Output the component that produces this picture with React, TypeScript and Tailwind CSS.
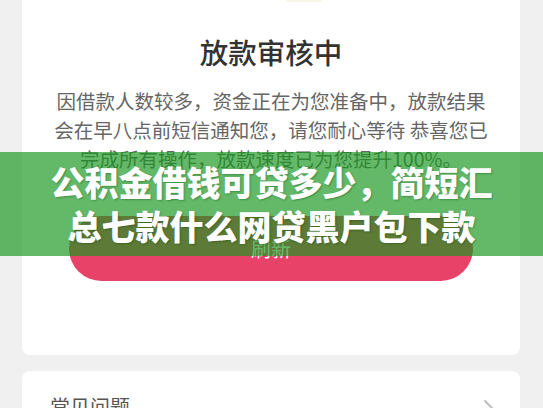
const cjk = "font-['Noto_Sans_CJK_SC','Noto_Sans',sans-serif]";

function Chevron() {
  return (
    <svg width="12" height="20" viewBox="0 0 12 20" fill="none" className="shrink-0">
      <path d="M2 2l8 8-8 8" stroke="#bdbdbd" strokeWidth="2" strokeLinecap="round" strokeLinejoin="round" />
    </svg>
  );
}

export default function App() {
  return (
    <div className={`relative h-[408px] w-[543px] overflow-hidden bg-[#f0f0f0] ${cjk}`}>
      <div className="flex flex-col gap-4 pl-[22px] pr-[23px]">
        {/* status card */}
        <div className="flex flex-col items-center rounded-b-lg bg-white pb-[74px]">
          <div className="flex w-full">
            <div className="ml-[264px] h-[2px] w-[36px] rounded-b-full bg-[#f8f6e6]" />
          </div>
          <h1 className="mt-[30px] text-[28.5px] font-medium leading-[40px] text-[#333]">放款审核中</h1>
          <div className="mt-[14px] text-center text-[19.5px] leading-[29px] text-[#666]">
            <p>因借款人数较多，资金正在为您准备中，放款结果</p>
            <p>会在早八点前短信通知您，请您耐心等待 恭喜您已</p>
            <p>完成所有操作，放款速度已为您提升100%。</p>
          </div>
          <button
            type="button"
            className="mt-[43px] flex h-[65px] w-[404px] items-center justify-center rounded-full bg-[#e94269] text-[20px] text-white"
          >
            刷新
          </button>
        </div>

        {/* faq card */}
        <div className="flex h-[80px] items-start justify-between rounded-lg bg-white pl-[28px] pr-[25px] pt-[22px]">
          <span className="text-[20px] leading-[28px] text-[#555]">常见问题</span>
          <div className="pt-[6px]">
            <Chevron />
          </div>
        </div>
      </div>

      {/* headline overlay */}
      <div className="absolute left-0 right-0 top-[152px] flex h-[104px] flex-col items-center justify-center bg-[rgba(24,151,31,0.67)]">
        <p className="text-[34px] font-black leading-[44px] text-white [text-shadow:1px_1px_2px_rgba(0,60,0,0.35)]">
          公积金借钱可贷多少，简短汇
        </p>
        <p className="text-[34px] font-black leading-[44px] text-white [text-shadow:1px_1px_2px_rgba(0,60,0,0.35)]">
          总七款什么网贷黑户包下款
        </p>
      </div>
    </div>
  );
}
